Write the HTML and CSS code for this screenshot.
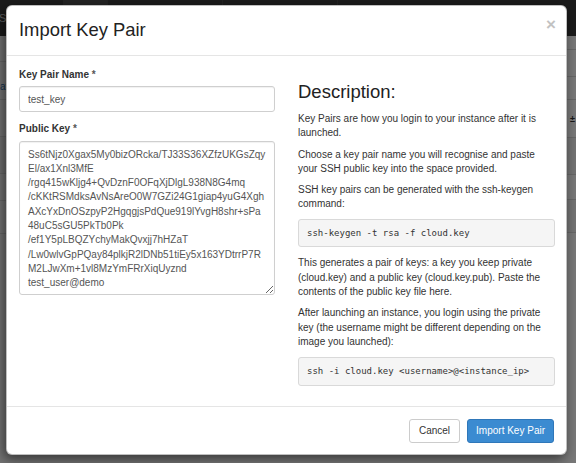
FILE: index.html
```html
<!DOCTYPE html>
<html lang="en">
<head>
<meta charset="utf-8">
<title>Import Key Pair</title>
<link rel="stylesheet" href="styles.css">
</head>
<body>
<div class="page">
  <header class="topbar">
    <span class="brand">Sto</span>
    <span class="seg seg-active"></span>
    <span class="seg"></span>
    <span class="seg"></span>
  </header>
  <div class="main">
    <aside class="side">
      <div class="side-row r1"></div>
      <div class="side-row r2"><span class="side-link">ati</span></div>
      <div class="side-row r3"></div>
      <div class="side-row r4"></div>
      <div class="side-row r5"></div>
      <div class="side-row r6"></div>
    </aside>
    <section class="content">
      <div class="c-row h14"></div>
      <div class="c-row h27"></div>
      <div class="c-row h23"></div>
      <div class="c-row h38"><span class="c-icon">±</span></div>
      <div class="c-row h37"></div>
      <div class="c-row h25"></div>
      <div class="c-row h33"></div>
    </section>
  </div>
</div>
<div class="backdrop"></div>

<div class="modal">
  <div class="modal-header">
    <h3 class="modal-title">Import Key Pair</h3>
    <span class="close">×</span>
  </div>
  <div class="modal-body">
    <div class="form-col">
      <div class="form-group">
        <label class="label" for="kpname">Key Pair Name <span class="req">*</span></label>
        <input class="form-control" id="kpname" type="text" value="test_key">
      </div>
      <div class="form-group">
        <label class="label" for="pubkey">Public Key <span class="req">*</span></label>
        <textarea class="form-control key-area" id="pubkey">Ss6tNjz0Xgax5My0bizORcka/TJ33S36XZfzUKGsZqy
El/ax1Xnl3MfE
/rgq415wKljg4+QvDznF0OFqXjDlgL938N8G4mq
/cKKtRSMdksAvNsAreO0W7GZi24G1giap4yuG4Xgh
AXcYxDnOSzpyP2HgqgjsPdQue919lYvgH8shr+sPa
48uC5sGU5PkTb0Pk
/ef1Y5pLBQZYchyMakQvxjj7hHZaT
/Lw0wlvGpPQay84plkjR2lDNb51tiEy5x163YDtrrP7R
M2LJwXm+1vl8MzYmFRrXiqUyznd
test_user@demo</textarea>
      </div>
    </div>
    <div class="desc-col">
      <h3 class="desc-title">Description:</h3>
      <p>Key Pairs are how you login to your instance after it is launched.</p>
      <p>Choose a key pair name you will recognise and paste your SSH public key into the space provided.</p>
      <p>SSH key pairs can be generated with the ssh-keygen command:</p>
      <pre class="code">ssh-keygen -t rsa -f cloud.key</pre>
      <p>This generates a pair of keys: a key you keep private (cloud.key) and a public key (cloud.key.pub). Paste the contents of the public key file here.</p>
      <p>After launching an instance, you login using the private key (the username might be different depending on the image you launched):</p>
      <pre class="code last">ssh -i cloud.key &lt;username&gt;@&lt;instance_ip&gt;</pre>
    </div>
  </div>
  <div class="modal-footer">
    <button class="btn btn-default" type="button">Cancel</button>
    <button class="btn btn-primary" type="button">Import Key Pair</button>
  </div>
</div>
</body>
</html>
```
FILE: styles.css
```css
* { box-sizing: border-box; }

html, body {
  margin: 0;
  padding: 0;
  width: 576px;
  height: 463px;
  overflow: hidden;
  font-family: "Liberation Sans", Arial, sans-serif;
  color: #333;
}

/* ---------- background page ---------- */
.page {
  width: 576px;
  height: 463px;
  background: #fff;
}

.topbar {
  height: 36px;
  background: #3a3a3a;
  display: flex;
  align-items: stretch;
}

.brand {
  font-size: 11px;
  line-height: 36px;
  color: #cfcfcf;
  margin-left: -1px;
  width: 64px;
}

.seg {
  width: 115px;
  border-right: 1px solid #4a4a4a;
}

.seg-active {
  background: #4c4c4c;
  width: 45px;
}

.main {
  display: flex;
  height: 427px;
}

.side {
  width: 200px;
  background: #f4f4f4;
}

.side-row {
  border-bottom: 1px solid #d8d8d8;
}

.side-row.r1 { height: 26px; }
.side-row.r2 { height: 38px; }
.side-row.r3 { height: 37px; }
.side-row.r4 { height: 37px; background: #ececec; }
.side-row.r5 { height: 27px; }
.side-row.r6 { height: 33px; }

.side-link {
  display: block;
  padding-top: 19px;
  font-size: 10px;
  color: #2d6ca8;
}

.content {
  flex: 1;
  background: #fff;
}

.c-row {
  border-bottom: 1px solid #dcdcdc;
  display: flex;
  justify-content: flex-end;
  align-items: center;
}

.c-row.h14 { height: 14px; }
.c-row.h27 { height: 27px; }
.c-row.h23 { height: 23px; }
.c-row.h38 { height: 38px; }
.c-row.h37 { height: 37px; background: #f5f5f5; }
.c-row.h25 { height: 25px; }
.c-row.h33 { height: 33px; background: #f5f5f5; }

.c-icon {
  font-size: 9px;
  font-weight: bold;
  color: #333;
  margin-right: 1px;
}

.backdrop {
  position: absolute;
  inset: 0;
  background: rgba(0, 0, 0, 0.53);
}

/* ---------- modal ---------- */
.modal {
  position: absolute;
  left: 6px;
  top: 5px;
  width: 561px;
  background: #fff;
  border: 1px solid rgba(0, 0, 0, 0.25);
  border-radius: 6px;
  box-shadow: -2px 4px 12px rgba(0, 0, 0, 0.55);
}

.modal-header {
  display: flex;
  justify-content: space-between;
  align-items: flex-start;
  padding: 14px 12px 15px 12px;
  border-bottom: 1px solid #e5e5e5;
}

.modal-title {
  margin: 0;
  font-size: 18.4px;
  font-weight: normal;
  line-height: 20px;
  color: #222;
}

.close {
  font-size: 17px;
  font-weight: bold;
  line-height: 17px;
  color: #c2c2c2;
  margin-top: -4px;
  margin-right: -2px;
}

.modal-body {
  display: grid;
  grid-template-columns: 256px 257px;
  column-gap: 23px;
  padding: 12px 11px 20px 12px;
  font-size: 10px;
  line-height: 14.3px;
}

.form-group {
  margin-bottom: 10px;
}

.label {
  display: block;
  font-weight: bold;
  font-size: 10px;
  line-height: 14.3px;
  margin-bottom: 4px;
  color: #333;
}

.req {
  color: #555;
}

.form-control {
  display: block;
  width: 100%;
  height: 26px;
  padding: 4px 8px;
  font-family: "Liberation Sans", Arial, sans-serif;
  font-size: 10px;
  line-height: 14.3px;
  color: #555;
  background: #fff;
  border: 1px solid #cfcfcf;
  border-radius: 3px;
  box-shadow: inset 0 1px 1px rgba(0, 0, 0, 0.06);
  outline: none;
}

.key-area {
  height: 154px;
  padding: 6px 8px;
  white-space: pre;
  overflow: hidden;
  resize: vertical;
  margin: 0;
}

.desc-title {
  margin: 14px 0 10px;
  font-size: 18.5px;
  font-weight: normal;
  line-height: 20px;
  color: #222;
}

.desc-col p {
  margin: 0 0 7px;
}

.code {
  margin: 0 0 9px;
  padding: 7px 8px;
  font-family: "DejaVu Sans Mono", "Liberation Mono", monospace;
  font-size: 9px;
  line-height: 12.6px;
  color: #333;
  background: #f5f5f5;
  border: 1px solid #d9d9d9;
  border-radius: 3px;
}

.code.last {
  margin-top: 8px;
  margin-bottom: 0;
}

.modal-footer {
  display: flex;
  justify-content: flex-end;
  gap: 7px;
  padding: 12px 12px 11px;
  border-top: 1px solid #e5e5e5;
}

.btn {
  height: 24px;
  padding: 0 8px;
  font-family: "Liberation Sans", Arial, sans-serif;
  font-size: 10px;
  line-height: 22px;
  border-radius: 3px;
  border: 1px solid #ccc;
  cursor: pointer;
}

.btn-default {
  background: #fff;
  color: #333;
  padding: 0 9px;
}

.btn-primary {
  background: #3b8bd1;
  border-color: #2f77b9;
  color: #fff;
}
```
